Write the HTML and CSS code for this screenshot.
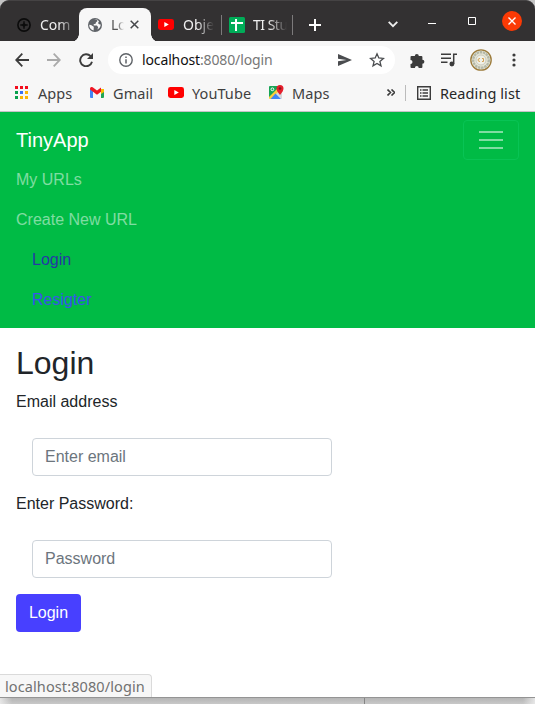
FILE: index.html
```html
<!DOCTYPE html>
<html lang="en">
<head>
<meta charset="utf-8">
<title>TinyApp</title>
<link rel="stylesheet" href="styles.css">
</head>
<body>
<div class="window">
  <header class="tabs">
    <div class="tab first">
      <svg width="14" height="14" viewBox="0 0 14 14" fill="none" stroke="#0b0b0b"><circle cx="7" cy="7" r="6.1" stroke-width="1.6"/><path d="M7 3.3v7.4M3.3 7h7.4" stroke-width="1.4"/><circle cx="7" cy="7" r="1.7" fill="#0b0b0b" stroke="none"/></svg>
      <span class="tab-title">Com</span>
    </div>
    <div class="tab active">
      <svg width="14" height="14" viewBox="0 0 14 14"><circle cx="7" cy="7" r="7" fill="#5f6368"/><path d="M1.2 6.8 3 7l2.8 1.8-.2 3.7C3 12 1.2 10 1.2 6.8zM6 1.3l2.9.4.6 1.3-1.6 1.4-.3 1.4-2 .4.2 1.4h3.1l1.3 1.6-.8 2.3c2-1 3.4-2.8 3.3-5l-1.7-.2-1-1.4 1-1.5C9.600 1 8 1 6 1.300z" fill="#f7f7f7"/></svg>
      <span class="tab-title">Lo</span>
      <svg class="tab-close" width="9" height="9" viewBox="0 0 9 9" fill="none" stroke="#45474a" stroke-width="1.5"><path d="M.7.7l7.600 7.600M8.300.7.7 8.300"/></svg>
    </div>
    <div class="tab third">
      <svg width="16" height="11" viewBox="0 0 16 11"><rect width="16" height="11" rx="2.400" fill="#f00"/><path d="M6.300 3v5l4.500-2.500z" fill="#fff"/></svg>
      <span class="tab-title">Obje</span>
    </div>
    <div class="tab fourth">
      <svg width="16" height="16" viewBox="0 0 16 16"><rect width="16" height="16" rx="1.500" fill="#00ac58"/><path d="M6 2h2v12H6zM2 5h12v2H2z" fill="#fff"/></svg>
      <span class="tab-title">TI Stu</span>
    </div>
    <svg class="plus" width="12" height="12" viewBox="0 0 12 12"><path d="M6 0v12M0 6h12" stroke="#fff" stroke-width="2"/></svg>
    <svg class="chevron" width="10" height="7" viewBox="0 0 10 7" fill="none" stroke="#eee" stroke-width="1.800"><path d="M.7.8 5 5.200 9.300.8"/></svg>
    <svg class="minimize" width="8" height="9" viewBox="0 0 8 9"><path d="M0 6.500h8" stroke="#fff"/></svg>
    <svg class="maximize" width="8" height="8" viewBox="0 0 8 8"><path d="M.5.5h7v7h-7z" fill="none" stroke="#fff"/></svg>
    <svg class="close" width="20" height="20" viewBox="0 0 20 20"><circle cx="10" cy="10" r="10" fill="#fb3a05"/><path d="M6.500 6.500l7 7M13.500 6.500l-7 7" stroke="#fff" stroke-width="1.400"/></svg>
  </header>
  <div class="toolbar">
    <svg class="back" width="14" height="14" viewBox="0 0 14 14" fill="none" stroke="#3c3c3c" stroke-width="1.800"><path d="M7.300.7 1.200 7l6.100 6.300M1 7h13"/></svg>
    <svg class="forward" width="14" height="14" viewBox="0 0 14 14" fill="none" stroke="#aaa" stroke-width="1.800"><path d="M6.700.7 12.800 7l-6.100 6.300M13 7H0"/></svg>
    <svg class="reload" width="14" height="14" viewBox="0 0 14 14"><path d="M11.600 3.200A6 6 0 1 0 13 8.800" fill="none" stroke="#3c3c3c" stroke-width="1.900"/><path d="M14 0v6H8z" fill="#3c3c3c"/></svg>
    <div class="address">
      <svg width="14" height="14" viewBox="0 0 14 14"><circle cx="7" cy="7" r="6.200" fill="none" stroke="#5f6368" stroke-width="1.400"/><path d="M6.250 6.200h1.500v4.300h-1.500zM6.250 3.400h1.500V5h-1.500z" fill="#5f6368"/></svg>
      <span class="url">localhost<span class="path">:8080/login</span></span>
      <svg class="send" width="14" height="12" viewBox="0 0 14 12"><path d="M0 0l14 6L0 12V7.300L8.500 6 0 4.700z" fill="#4a4c4f"/></svg>
      <svg class="star" width="16" height="16" viewBox="0 0 16 16"><path d="M8 1.800 9.800 6l4.600.4-3.500 3 1.100 4.500L8 11.500l-4 2.400 1.100-4.500-3.500-3L6.200 6z" fill="none" stroke="#4a4c4f" stroke-width="1.300"/></svg>
    </div>
    <svg class="puzzle" width="15" height="15" viewBox="0 0 15 15"><path d="M4.800 3.100a2 2 0 0 1 4 0h2.600q1 0 1 1v2.700a2 2 0 0 1 0 4V14q0 1-1 1H8.700a1.900 1.900 0 0 0-3.800 0H1.500q-1 0-1-1v-3a1.900 1.900 0 0 0 0-4V4.100q0-1 1-1z" fill="#3c3c3c"/></svg>
    <svg class="music" width="16" height="14" viewBox="0 0 16 14" fill="none" stroke="#3c3c3c" stroke-width="1.500"><path d="M0 1.200h10M0 5.200h10M0 9.200h6.500M12.700 11V1.200H16"/><circle cx="10.900" cy="11" r="1.700" fill="#3c3c3c"/></svg>
    <svg class="avatar" width="22" height="22" viewBox="0 0 22 22"><circle cx="11" cy="11" r="10.200" fill="#e7e5d5" stroke="#9c7b3b" stroke-width="1.300"/><circle cx="11" cy="11" r="7.800" fill="none" stroke="#b3b8a8" stroke-width="2.400" stroke-dasharray="2.500 .7"/><circle cx="11" cy="11" r="5" fill="#f0f0e7" stroke="#c9cbbd"/><path d="M10 9.500q-2 0-2 1.500t2 1.500M12 9.500h1.500v3H12" fill="none" stroke="#d5a153"/></svg>
    <svg class="menu" width="4" height="14" viewBox="0 0 4 14" fill="#3c3c3c"><circle cx="2" cy="2" r="1.600"/><circle cx="2" cy="7" r="1.600"/><circle cx="2" cy="12" r="1.600"/></svg>
  </div>
  <nav class="bookmarks">
    <svg class="apps" width="13" height="13" viewBox="0 0 13 13"><path d="M0 0h3v3H0zM5 0h3v3H5zM10 0h3v3h-3z" fill="#f20d1d"/><path d="M0 5h3v3H0zM0 10h3v3H0z" fill="#08a04c"/><path d="M5 5h3v3H5z" fill="#3970f5"/><path d="M10 5h3v3h-3zM5 10h3v3H5zM10 10h3v3h-3z" fill="#fbb505"/></svg>
    <span class="label w-apps">Apps</span>
    <svg class="gmail" width="14" height="11" viewBox="0 0 14 11"><path d="M0 2v8q0 1 1 1h2V4z" fill="#4285f4"/><path d="M14 2v8q0 1-1 1h-2V4z" fill="#20a657"/><path d="M14 2v3l-3 2V2z" fill="#fbbc04"/><path d="M0 2C0 0 1.800-.5 3 .4l4 3.200 4-3.200v4.300L7 7.800 0 2.600z" fill="#ef1623"/></svg>
    <span class="label w-gmail">Gmail</span>
    <svg class="youtube" width="16" height="11" viewBox="0 0 16 11"><rect width="16" height="11" rx="2.400" fill="#f00"/><path d="M6.300 3v5l4.500-2.500z" fill="#fff"/></svg>
    <span class="label w-youtube">YouTube</span>
    <svg class="maps" width="15" height="15" viewBox="0 0 15 15"><rect y="1" width="13" height="13" rx="1.500" fill="#e8eaed"/><path d="M0 13V2q0-1 1-1h8v4z" fill="#17a556"/><path d="M7 8.500l5.500 5.500q.5-.3.500-1V8L10 6z" fill="#d5d7da"/><path d="M0 12l9-9 2 2-9 9H1q-1 0-1-1z" fill="#fbcf3a"/><path d="M1.500 14l5-5.500L12 14z" fill="#4285f4"/><circle cx="3.400" cy="4.300" r="1.400" fill="none" stroke="#fff"/><path d="M11 10Q7.500 6 7.500 3.500a3.500 3.500 0 0 1 7 0Q14.500 6 11 10z" fill="#e61f2c"/><circle cx="11" cy="3.500" r="1.300" fill="#85151d"/></svg>
    <span class="label w-maps">Maps</span>
    <svg class="more" width="8" height="7" viewBox="0 0 8 7" fill="none" stroke="#3c3c3c" stroke-width="1.600"><path d="M.5.500l3 3-3 3M4.500.500l3 3-3 3"/></svg>
    <span class="divider"></span>
    <svg class="list" width="14" height="14" viewBox="0 0 14 14"><path d="M.7.700h12.600v12.600H.7z" fill="none" stroke="#3c3c3c" stroke-width="1.400"/><path d="M3 3.200h1.500v1.600H3zM3 6.200h1.500v1.600H3zM3 9.200h1.500v1.600H3zM5.500 3.200H11v1.600H5.500zM5.500 6.200H11v1.600H5.500zM5.500 9.200H11v1.600H5.500z" fill="#3c3c3c"/></svg>
    <span class="label w-reading">Reading list</span>
  </nav>
  <main class="page">
    <nav class="navbar">
      <div class="brand-row">
        <a class="brand">TinyApp</a>
        <button class="toggler" aria-label="Menu"><svg width="30" height="30" viewBox="0 0 30 30"><path d="M4 7h22M4 15h22M4 23h22" stroke="#fff" stroke-opacity=".5" stroke-width="2" stroke-linecap="square"/></svg></button>
      </div>
      <a class="link">My URLs</a>
      <a class="link">Create New URL</a>
      <a class="link login">Login</a>
      <a class="link register">Resigter</a>
    </nav>
    <form class="form">
      <h2>Login</h2>
      <label>Email address</label>
      <input type="email" placeholder="Enter email">
      <label>Enter Password:</label>
      <input type="password" placeholder="Password">
      <button class="submit" type="button">Login</button>
    </form>
    <div class="status"><span>localhost:8080/login</span></div>
  </main>
</div>
<div class="desktop"><span class="behind"></span></div>
</body>
</html>
```
FILE: styles.css
```css
* { box-sizing: border-box; }
body { margin: 0; width: 535px; height: 704px; overflow: hidden; background: #c4c4c4; font-family: "Liberation Sans", Arial, sans-serif; font-size: 16px; line-height: 24px; color: #212529; }
svg { display: block; flex: none; }
.window { height: 697px; display: flex; flex-direction: column; }
.tabs, .toolbar, .bookmarks { display: flex; align-items: center; flex: none; font-family: "Noto Sans", "Open Sans", sans-serif; font-size: 14px; line-height: 20px; white-space: nowrap; }
.tabs { height: 41px; padding-top: 7px; background: #333132; border-top: 1px solid #454344; border-radius: 9px 9px 0 0; color: #f0f0f0; }
.tab { display: flex; align-items: center; height: 34px; flex: none; }
.tab-title { overflow: hidden; margin-left: 9px; width: 31px; -webkit-mask-image: linear-gradient(90deg, #000 45%, transparent); mask-image: linear-gradient(90deg, #000 45%, transparent); }
.first { width: 79px; padding-left: 17px; }
.first .tab-title { -webkit-mask-image: linear-gradient(90deg, #000 60%, rgba(0,0,0,.3)); mask-image: linear-gradient(90deg, #000 60%, rgba(0,0,0,.3)); }
.active { width: 72px; padding-left: 9px; background: #f7f7f7; border-radius: 8px 8px 0 0; color: #555; position: relative; }
.active::before, .active::after { content: ""; position: absolute; bottom: 0; width: 8px; height: 8px; }
.active::before { left: -8px; background: radial-gradient(circle at 0 0, transparent 7.5px, #f7f7f7 8px); }
.active::after { right: -8px; background: radial-gradient(circle at 100% 0, transparent 7.5px, #f7f7f7 8px); }
.active .tab-title { width: 13px; letter-spacing: -.4px; }
.tab-close { margin-left: 6px; }
.third { width: 71px; padding-left: 7px; }
.fourth { width: 71px; padding-left: 7px; }
.third::after, .fourth::after { content: ""; width: 1px; height: 20px; background: #7c7a7b; margin-left: auto; }
.fourth .tab-title { margin-left: 8px; width: 34px; letter-spacing: -.5px; }
.plus { margin-left: 16px; }
.chevron { margin-left: 67px; }
.minimize { margin-left: 30px; margin-top: -7px; }
.maximize { margin-left: 32px; margin-top: -7px; }
.close { margin-left: 26px; margin-top: -7px; }
.toolbar { height: 38px; background: #f7f7f7; }
.back { margin-left: 15px; }
.forward { margin-left: 18px; }
.reload { margin-left: 18px; }
.address { width: 287px; height: 28px; margin-left: 15px; padding-left: 11px; border-radius: 14px; background: #fff; display: flex; align-items: center; flex: none; }
.url { width: 196px; margin-left: 9px; color: #111; letter-spacing: -.13px; }
.path { color: #777; }
.send { margin-left: 0; }
.star { margin-left: 17px; }
.puzzle { margin-left: 15px; }
.music { margin-left: 16px; }
.avatar { margin-left: 13px; }
.menu { margin-left: 20px; }
.bookmarks { height: 33px; background: #f7f7f7; border-bottom: 1px solid #c6c3c7; padding-bottom: 5px; color: #3f3f3f; }
.apps { margin-left: 15px; }
.label { margin-left: 10px; flex: none; font-size: 14.5px; letter-spacing: .08px; }
.w-apps { width: 52px; }
.w-gmail { width: 55px; margin-left: 9px; }
.w-youtube { width: 77px; margin-left: 8px; }
.w-maps { width: 95px; margin-left: 8px; }
.divider { width: 1px; height: 16px; margin-left: 10px; margin-right: 11px; background: #bbb; }
.w-reading { margin-left: 9px; color: #272727; }
.page { flex: 1; min-height: 0; background: #fff; position: relative; }
.navbar { height: 216px; padding: 8px 16px; background: #00bb45; }
.brand-row { height: 40px; display: flex; align-items: center; justify-content: space-between; }
.brand { font-size: 20px; color: #fff; }
.toggler { width: 56px; height: 40px; padding: 0 12px; border: 1px solid #08c455; border-radius: 4px; background: transparent; }
.link { display: block; padding: 8px 0; color: rgba(255,255,255,.5); }
.login, .register { padding-left: 16px; }
.login { color: #2538a5; }
.register { color: #3b51ec; }
.form { padding: 16px; display: flex; flex-direction: column; align-items: flex-start; }
h2 { margin: 0 0 8px; font-size: 32px; font-weight: 400; line-height: 38px; }
input { width: 300px; height: 38px; margin: 24px 16px 16px; padding: 6px 12px; border: 1px solid #ced4da; border-radius: 4px; font: inherit; background: #fff; }
input::placeholder { color: #6c757d; opacity: 1; }
.submit { width: 65px; height: 38px; padding: 0; border: 0; border-radius: 4px; background: #4840ff; color: #fff; font: inherit; }
.status { position: absolute; left: 0; bottom: 0; width: 152px; height: 23px; padding-left: 5px; border: 1px solid #dadada; border-left: 0; border-bottom: 0; border-radius: 0 4px 0 0; background: #f7f7f7; font-family: "Noto Sans", "Open Sans", sans-serif; font-size: 14.5px; letter-spacing: .1px; line-height: 22px; color: #717171; white-space: nowrap; }
.desktop { height: 7px; padding-left: 364px; border-top: 1px solid #949494; background: linear-gradient(90deg, rgba(240,240,240,.8), transparent 12px, transparent 523px, rgba(240,240,240,.8)), linear-gradient(#b5b5b5, #c8c8c8); }
.behind { display: block; width: 1px; height: 6px; background: #858585; }
```
